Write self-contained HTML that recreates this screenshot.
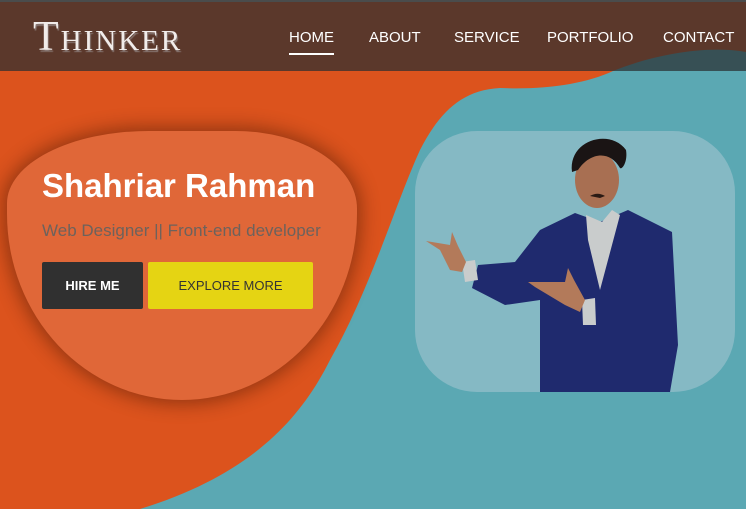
<!DOCTYPE html>
<html><head><meta charset="utf-8"><style>
*{margin:0;padding:0;box-sizing:border-box}
body{width:746px;height:509px;overflow:hidden;position:relative;background:#dc531d;font-family:"Liberation Sans",sans-serif}
#bg{position:absolute;left:0;top:0}
header{position:absolute;left:0;top:0;width:746px;height:71px;background:rgba(42,46,48,0.72);border-top:2px solid #4a4c4c}
.logo{position:absolute;left:33px;top:12px;font-family:"Liberation Serif",serif;font-variant:small-caps;font-size:42px;color:#f1ecea;letter-spacing:2px;text-shadow:1px 2px 1px #8a7a76;line-height:46px}
nav a{position:absolute;top:26px;color:#fff;font-size:15px;text-decoration:none;line-height:20px}
.home:after{content:"";position:absolute;left:0;right:0;top:25px;height:2px;background:#fff}
.blob{position:absolute;left:7px;top:131px;width:350px;height:269px;background:rgba(255,255,255,0.12);border-radius:42% 36% 52% 52% / 28% 30% 72% 72%;box-shadow:0 0 18px 4px rgba(60,20,5,0.45)}
h1{position:absolute;left:42px;top:166px;color:#fff;font-size:33px;font-weight:bold;line-height:40px}
.sub{position:absolute;left:42px;top:220px;color:#6d625c;font-size:17px;line-height:22px}
.btn{position:absolute;top:262px;height:47px;font-size:13px;font-weight:bold;display:flex;align-items:center;justify-content:center;border-radius:2px}
.card{position:absolute;left:415px;top:131px;width:320px;height:261px;background:#85b9c4;border-radius:62px}
</style></head><body>
<svg id="bg" width="746" height="509"><path d="M746,52 C700,44 645,58 613,71 C585,84 545,90 500,88 C460,90 438,115 420,150 C395,205 370,290 330,360 C300,420 250,475 140,509 L746,509 Z" fill="#5ba8b3"/></svg>
<div class="blob"></div>
<h1>Shahriar Rahman</h1>
<div class="sub">Web Designer || Front-end developer</div>
<div class="btn" style="left:42px;width:101px;background:#303030;color:#fff">HIRE ME</div>
<div class="btn" style="left:148px;width:165px;background:#e5d413;color:#333;font-weight:normal">EXPLORE MORE</div>
<div class="card"></div>
<svg style="position:absolute;left:0;top:0" width="746" height="509">
<path d="M540,230 L575,213 L600,222 L628,210 L672,232 L678,345 L670,392 L540,392 L540,300 L505,305 L472,288 L478,265 L515,262 Z" fill="#1f2a6e"/>
<path d="M586,215 L602,222 L612,210 L620,215 L600,290 L588,240 Z" fill="#c9cccc"/>
<path d="M582,300 L595,298 L596,325 L583,325 Z" fill="#c9cccc"/>
<path d="M462,262 L475,260 L478,280 L465,282 Z" fill="#c9cccc"/>
<path d="M426,241 L450,245 L452,232 L458,246 L466,262 L462,272 L450,270 L440,250 Z" fill="#b37a5a"/>
<path d="M528,282 L565,282 L568,268 L574,280 L585,300 L580,312 L565,305 L535,287 Z" fill="#b37a5a"/>
<ellipse cx="597" cy="180" rx="22" ry="28" fill="#a86f52"/>
<path d="M572,172 C568,140 610,128 626,150 C628,162 622,170 620,168 C610,150 590,152 578,170 Z" fill="#1a1414"/>
<path d="M590,196 C595,193 600,193 605,196 L600,198 Z" fill="#2a1a14"/>
</svg>
<header>
<div class="logo">Thinker</div>
<nav>
<a class="home" style="left:289px">HOME</a>
<a style="left:369px">ABOUT</a>
<a style="left:454px">SERVICE</a>
<a style="left:547px">PORTFOLIO</a>
<a style="left:663px">CONTACT</a>
</nav>
</header>
</body></html>
